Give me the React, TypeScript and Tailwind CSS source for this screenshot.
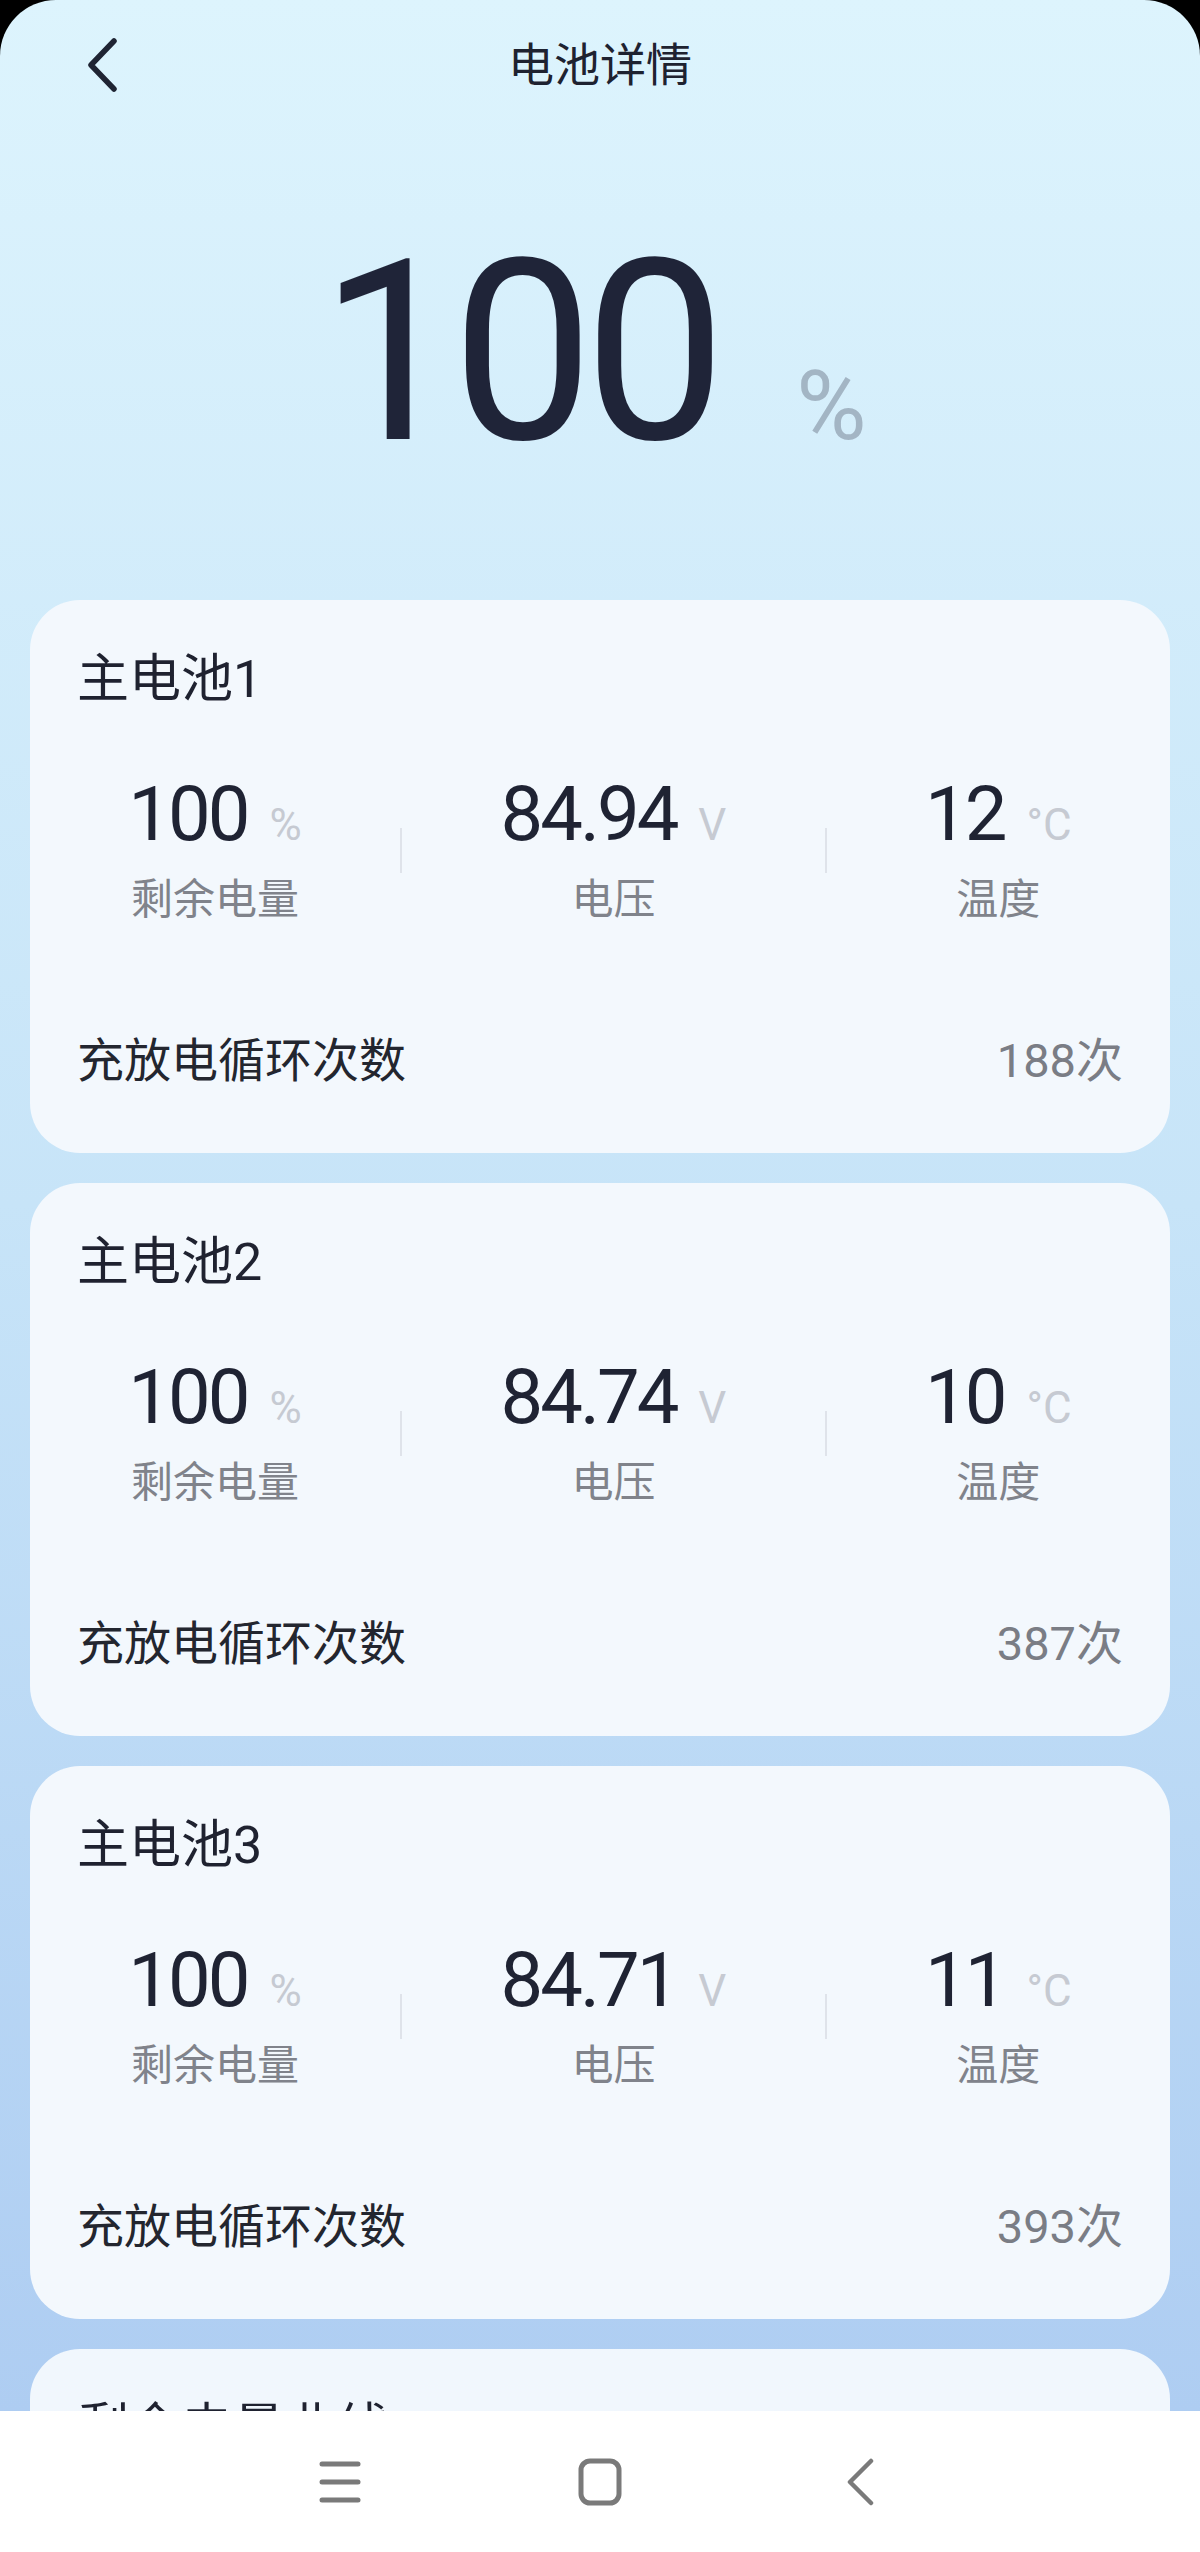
const font = "font-['Roboto','Noto_Sans_CJK_SC',sans-serif]";

type Stat = { value: string; unit: string; label: string };

type Pack = {
  name: string;
  stats: Stat[];
  cycles: string;
};

const packs: Pack[] = [
  {
    name: "主电池1",
    stats: [
      { value: "100", unit: "%", label: "剩余电量" },
      { value: "84.94", unit: "V", label: "电压" },
      { value: "12", unit: "°C", label: "温度" },
    ],
    cycles: "188次",
  },
  {
    name: "主电池2",
    stats: [
      { value: "100", unit: "%", label: "剩余电量" },
      { value: "84.74", unit: "V", label: "电压" },
      { value: "10", unit: "°C", label: "温度" },
    ],
    cycles: "387次",
  },
  {
    name: "主电池3",
    stats: [
      { value: "100", unit: "%", label: "剩余电量" },
      { value: "84.71", unit: "V", label: "电压" },
      { value: "11", unit: "°C", label: "温度" },
    ],
    cycles: "393次",
  },
];

function StatCol({ stat }: { stat: Stat }) {
  return (
    <div className="flex flex-col items-center">
      <div className="flex items-baseline">
        <span className="text-[76px] leading-[76px] tracking-[-3px] text-[#1f2333]">{stat.value}</span>
        <span className="ml-[22px] text-[44px] leading-[44px] text-[#c6cad2]">{stat.unit}</span>
      </div>
      <span className="mt-[23px] text-[42px] leading-[50px] text-[#80838b]">{stat.label}</span>
    </div>
  );
}

function PackCard({ pack }: { pack: Pack }) {
  return (
    <div className="mx-[30px] rounded-[50px] bg-[#f3f8fd] pt-[49px] pb-[64px]">
      <p className="px-[47px] text-[52px] leading-[62px] text-[#1f2230]">{pack.name}</p>
      <div className="mt-[65px] flex items-center justify-evenly">
        <StatCol stat={pack.stats[0]} />
        <div className="h-[45px] w-[2px] bg-[#dfe3ea]" />
        <StatCol stat={pack.stats[1]} />
        <div className="h-[45px] w-[2px] bg-[#dfe3ea]" />
        <StatCol stat={pack.stats[2]} />
      </div>
      <div className="mt-[108px] flex items-center justify-between px-[47px] text-[47px] leading-[56px]">
        <span className="text-[#23262f]">充放电循环次数</span>
        <span className="text-[#7a7d85]">{pack.cycles}</span>
      </div>
    </div>
  );
}

export default function App() {
  return (
    <div className={`h-[2552px] w-[1200px] bg-black ${font}`}>
      <div className="flex h-full flex-col overflow-hidden rounded-t-[56px]">
        <div className="flex-1 overflow-hidden bg-linear-to-b from-[#ddf4fd] via-[#c7e4f8] to-[#aecdf2]">
          {/* header */}
          <div className="grid h-[130px] grid-cols-[1fr_auto_1fr] items-center">
            <div className="pl-[85px]">
              <svg width="34" height="54" viewBox="0 0 34 54" fill="none">
                <polyline
                  points="29,3 6,27 29,51"
                  stroke="#1f2433"
                  strokeWidth="5.5"
                  strokeLinecap="round"
                  strokeLinejoin="round"
                />
              </svg>
            </div>
            <h1 className="text-[46px] leading-[56px] text-[#1e2230]">电池详情</h1>
            <div />
          </div>

          {/* total */}
          <div className="mt-[96px] flex items-baseline justify-center pr-[14px]">
            <span className="text-[253px] leading-[253px] tracking-[-10px] text-[#1f2438]">100</span>
            <span className="ml-[80px] text-[96px] leading-[96px] text-[#a3b5c4]">%</span>
          </div>

          <div className="mt-[121px] flex flex-col gap-[30px]">
            {packs.map((pack) => (
              <PackCard key={pack.name} pack={pack} />
            ))}
            <div className="mx-[30px] h-[400px] rounded-[50px] bg-[#f1f7fd] pt-[49px]">
              <p className="px-[47px] text-[52px] leading-[62px] text-[#1f2230]">剩余电量曲线</p>
            </div>
          </div>
        </div>

        {/* system nav */}
        <div className="flex h-[141px] items-center justify-center bg-white">
          <div className="flex w-[260px] justify-center">
            <svg width="42" height="44" viewBox="0 0 42 44" fill="none">
              <g stroke="#7a7a7a" strokeWidth="5" strokeLinecap="round">
                <line x1="3" y1="4" x2="39" y2="4" />
                <line x1="3" y1="22" x2="39" y2="22" />
                <line x1="3" y1="40" x2="39" y2="40" />
              </g>
            </svg>
          </div>
          <div className="flex w-[260px] justify-center">
            <svg width="44" height="48" viewBox="0 0 44 48" fill="none">
              <rect x="3" y="3" width="38" height="42" rx="9" stroke="#7a7a7a" strokeWidth="5" />
            </svg>
          </div>
          <div className="flex w-[260px] justify-center">
            <svg width="30" height="48" viewBox="0 0 30 48" fill="none">
              <polyline
                points="26,3 5,24 26,45"
                stroke="#7a7a7a"
                strokeWidth="4.5"
                strokeLinecap="round"
                strokeLinejoin="round"
              />
            </svg>
          </div>
        </div>
      </div>
    </div>
  );
}
